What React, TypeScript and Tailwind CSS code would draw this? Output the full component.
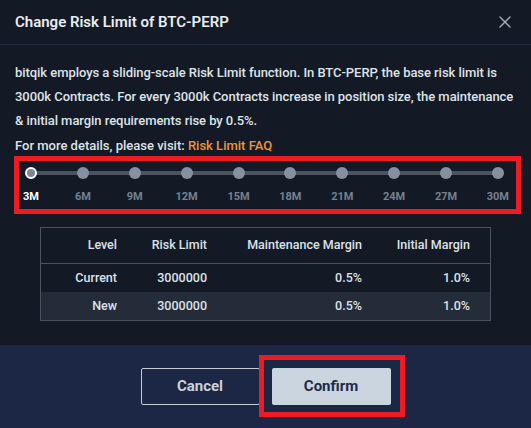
import { X } from 'lucide-react'

const steps = ['3M', '6M', '9M', '12M', '15M', '18M', '21M', '24M', '27M', '30M']

const rows = [
  { level: 'Current', limit: '3000000', mm: '0.5%', im: '1.0%' },
  { level: 'New', limit: '3000000', mm: '0.5%', im: '1.0%' },
]

export default function App() {
  const active = 0

  return (
    <div className="w-[531px] h-[428px] flex flex-col bg-[#131a26] font-['Roboto',sans-serif] overflow-hidden">
      {/* Header */}
      <div className="h-[45px] shrink-0 flex items-center justify-between pl-[15px] pr-[16px] border-b border-[#1f2a3d]">
        <h2 className="text-[15px] font-semibold text-[#e9ecf0]">Change Risk Limit of BTC-PERP</h2>
        <X className="w-[20px] h-[20px] text-[#a3abb7]" strokeWidth={1.6} />
      </div>

      {/* Body */}
      <div className="flex-1 px-[15px] pt-[16px]">
        <p className="mr-[-3px] text-[13px] leading-[24px] font-medium text-[#dfe3e8] tracking-[-0.05px]">
          bitqik employs a sliding-scale Risk Limit function. In BTC-PERP, the base risk limit is 3000k
          Contracts. For every 3000k Contracts increase in position size, the maintenance &amp; initial
          margin requirements rise by 0.5%.
        </p>
        <p className="mt-[3px] text-[13px] leading-[20px] font-medium text-[#dfe3e8]">
          For more details, please visit: <span className="text-[#f0923a]">Risk Limit FAQ</span>
        </p>

        {/* Slider */}
        <div className="ml-[-1px] w-[507px] border-[5px] border-[#ed1c24] pl-[6px] pr-[12px] pt-[6px] pb-[5px]">
          <div className="relative flex justify-between">
            <div className="absolute left-[6px] right-[6px] top-[4px] h-[4px] bg-[#4b5360]" />
            {steps.map((s, i) => (
              <div
                key={s}
                className={
                  i === active
                    ? 'relative w-3 h-3 rounded-full bg-[#7d8897] border-2 border-white'
                    : 'relative w-3 h-3 rounded-full bg-[#8591a0]'
                }
              />
            ))}
          </div>
          <div className="mt-[11px] flex justify-between">
            {steps.map((s, i) => (
              <div key={s} className="w-3 flex justify-center">
                <span
                  className={
                    i === active
                      ? 'whitespace-nowrap text-[11px] leading-[14px] font-bold text-white'
                      : 'whitespace-nowrap text-[11px] leading-[14px] font-bold text-[#76818f]'
                  }
                >
                  {s}
                </span>
              </div>
            ))}
          </div>
        </div>

        {/* Table */}
        <div className="mt-[13px] mx-[25px] border border-[#4b5260] text-[12.5px] font-medium text-[#dde2e8]">
          <div className="h-[36px] grid grid-cols-[76px_90px_155px_108px] items-center text-right border-b border-[#4b5260]">
            <span>Level</span>
            <span>Risk Limit</span>
            <span>Maintenance Margin</span>
            <span>Initial Margin</span>
          </div>
          {rows.map((r, i) => (
            <div
              key={r.level}
              className={
                i === 1
                  ? 'h-[28px] grid grid-cols-[76px_90px_155px_108px] items-center text-right bg-[#252c39]'
                  : 'h-[28px] grid grid-cols-[76px_90px_155px_108px] items-center text-right'
              }
            >
              <span>{r.level}</span>
              <span>{r.limit}</span>
              <span>{r.mm}</span>
              <span>{r.im}</span>
            </div>
          ))}
        </div>
      </div>

      {/* Footer */}
      <div className="h-[83px] shrink-0 bg-[#1b2744] flex items-center justify-center gap-3">
        <button className="w-[119px] h-[37px] rounded-[2px] border border-[#c3cbd6] text-[15px] font-bold text-[#c9d2dd]">
          Cancel
        </button>
        <div className="relative">
          <button className="w-[119px] h-[37px] rounded-[2px] bg-[#cbd5e0] text-[15px] font-bold text-[#1d2a4a]">
            Confirm
          </button>
          <div className="absolute -left-[13px] -right-[14px] -top-[13px] -bottom-[12px] border-[5px] border-[#ed1c24] pointer-events-none" />
        </div>
      </div>
    </div>
  )
}
